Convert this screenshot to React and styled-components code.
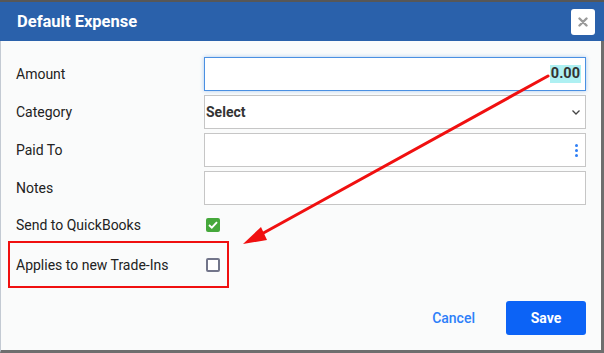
import React from "react";
import styled, { createGlobalStyle } from "styled-components";

const GlobalStyle = createGlobalStyle`
  html, body { margin: 0; padding: 0; }
  body { font-family: Roboto, "Liberation Sans", Arial, sans-serif; }
  * { box-sizing: border-box; }
`;

const Frame = styled.div`
  position: relative;
  height: 353px;
  display: flex;
  flex-direction: column;
  border-top: 2px solid #575757;
  overflow: hidden;
`;

const Header = styled.div`
  height: 39px;
  background: #2a61ab;
  display: flex;
  align-items: center;
  justify-content: space-between;
  padding: 0 9px 0 17px;
`;

const Title = styled.h2`
  margin: 0;
  color: #fff;
  font-size: 16.5px;
  font-weight: 700;
`;

const CloseButton = styled.button`
  width: 24px;
  height: 26px;
  margin-top: 1px;
  border: none;
  border-radius: 3px;
  background: #fff;
  padding: 0;
  display: flex;
  align-items: center;
  justify-content: center;
`;

const Body = styled.div`
  flex: 1;
  display: flex;
  flex-direction: column;
  background: #fafbfb;
  border-left: 1px solid #c3cad3;
  border-right: 3px solid #6e6e6e;
  border-bottom: 3px solid #6e6e6e;
  padding: 16px 15px 15px 15px;
`;

const Row = styled.div`
  display: grid;
  grid-template-columns: 188px 1fr;
  align-items: center;
  height: ${(p) => p.$h || 34}px;
  margin-bottom: ${(p) => (p.$gap == null ? 4 : p.$gap)}px;
`;

const Highlight = styled.div`
  display: grid;
  grid-template-columns: 188px 1fr;
  align-items: center;
  width: 221px;
  height: 47px;
  margin-left: -8px;
  padding-left: 6px;
  border: 2px solid #f01010;
`;

const Label = styled.label`
  font-size: 14px;
  color: #222;
`;

const Field = styled.div`
  position: relative;
  height: 34px;
  display: flex;
  align-items: center;
  justify-content: ${(p) => (p.$right ? "flex-end" : "space-between")};
  background: #fff;
  border: 1px solid ${(p) => (p.$focus ? "#4a90e2" : "#c6c6c6")};
  box-shadow: ${(p) => (p.$focus ? "0 0 4px rgba(74,144,226,0.45)" : "none")};
  padding: 0 4px 0 1px;
  font-size: 14px;
  color: #333;
`;

const Value = styled.span`
  font-weight: 700;
  font-size: 14.5px;
  background: #aef0f2;
  color: #333;
  line-height: 18px;
  padding: 0 1px;
`;

const SelectText = styled.span`
  font-weight: 700;
`;

const Kebab = styled.span`
  display: flex;
  flex-direction: column;
  gap: 2px;
  margin-right: 3px;
  span {
    width: 3px;
    height: 3px;
    border-radius: 50%;
    background: #2f7ff5;
  }
`;

const Check = styled.span`
  width: 14px;
  height: 14px;
  margin-left: 2px;
  border-radius: 2px;
  display: flex;
  align-items: center;
  justify-content: center;
  background: ${(p) => (p.$on ? "#45a83b" : "#fff")};
  border: ${(p) => (p.$on ? "none" : "2px solid #72758a")};
`;

const Footer = styled.div`
  margin-top: auto;
  display: flex;
  justify-content: flex-end;
  align-items: center;
  gap: 31px;
`;

const LinkButton = styled.button`
  border: none;
  background: none;
  padding: 0;
  color: #2d7ff9;
  font-family: inherit;
  font-size: 14px;
  font-weight: 500;
`;

const PrimaryButton = styled.button`
  width: 80px;
  height: 34px;
  border: none;
  border-radius: 3px;
  background: #0c63f6;
  color: #fff;
  font-family: inherit;
  font-size: 14px;
  font-weight: 700;
`;

const Overlay = styled.svg`
  position: absolute;
  left: 0;
  top: 0;
  pointer-events: none;
`;

export default function App() {
  return (
    <>
      <GlobalStyle />
      <Frame>
        <Header>
          <Title>Default Expense</Title>
          <CloseButton aria-label="Close">
            <svg width="10" height="10" viewBox="0 0 10 10">
              <path d="M1.5 1.5 L8.5 8.5 M8.5 1.5 L1.5 8.5" stroke="#9a9a9a" strokeWidth="2.4" strokeLinecap="round" />
            </svg>
          </CloseButton>
        </Header>
        <Body>
          <Row>
            <Label>Amount</Label>
            <Field $focus $right>
              <Value>0.00</Value>
            </Field>
          </Row>
          <Row>
            <Label>Category</Label>
            <Field>
              <SelectText>Select</SelectText>
              <svg width="10" height="7" viewBox="0 0 10 7">
                <path d="M1.5 1.5 L5 5 L8.5 1.5" fill="none" stroke="#444" strokeWidth="1.3" />
              </svg>
            </Field>
          </Row>
          <Row>
            <Label>Paid To</Label>
            <Field $right>
              <Kebab>
                <span />
                <span />
                <span />
              </Kebab>
            </Field>
          </Row>
          <Row>
            <Label>Notes</Label>
            <Field />
          </Row>
          <Row $h={32} $gap={0}>
            <Label>Send to QuickBooks</Label>
            <Check $on>
              <svg width="10" height="8" viewBox="0 0 10 8">
                <path d="M1 4 L3.8 6.6 L9 1.2" fill="none" stroke="#fff" strokeWidth="1.9" />
              </svg>
            </Check>
          </Row>
          <Highlight>
            <Label>Applies to new Trade-Ins</Label>
            <Check />
          </Highlight>
          <Footer>
            <LinkButton>Cancel</LinkButton>
            <PrimaryButton>Save</PrimaryButton>
          </Footer>
        </Body>
        <Overlay width="604" height="353" viewBox="0 0 604 353">
          <line x1="548" y1="74" x2="258" y2="234" stroke="#f01010" strokeWidth="3" strokeLinecap="round" />
          <polygon points="243,242 261,225 267,238" fill="#f01010" />
        </Overlay>
      </Frame>
    </>
  );
}
